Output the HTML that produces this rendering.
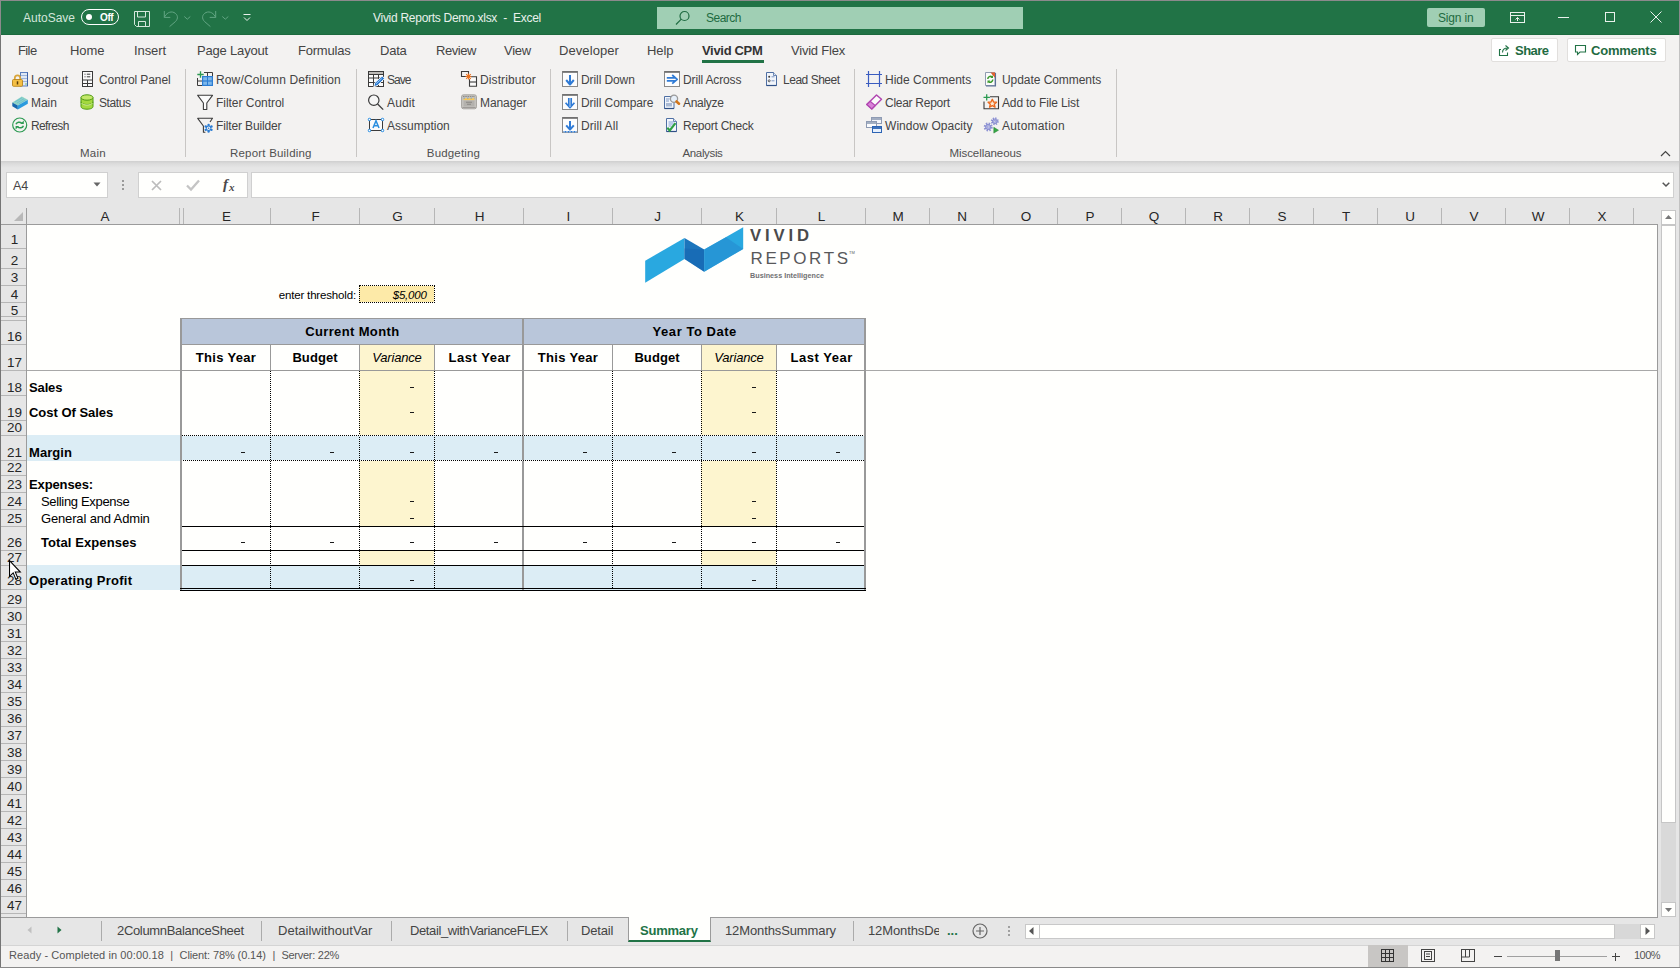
<!DOCTYPE html><html><head><meta charset="utf-8"><title>Excel</title><style>*{box-sizing:border-box;margin:0;padding:0}
html,body{width:1680px;height:968px;overflow:hidden;background:#e6e6e6}
body{font-family:"Liberation Sans",sans-serif;font-size:12px;color:#444}
#win{position:absolute;left:0;top:0;width:1680px;height:968px;overflow:hidden;background:#e6e6e6}
.abs,.t,.b{position:absolute}
.t{white-space:nowrap;line-height:1}
svg{position:absolute;overflow:visible}
/* title bar */
#tb{position:absolute;left:0;top:0;width:1680px;height:35px;background:#217346}
#tb .t{color:#fff}
/* tabs */
#tabs{position:absolute;left:0;top:35px;width:1680px;height:30px;background:#f3f2f1}
#tabs .t{font-size:13px;color:#444;top:9px}
/* ribbon */
#rb{position:absolute;left:0;top:65px;width:1680px;height:96px;background:#f3f2f1}
#rb .t{font-size:12px;color:#444}
#rb .g{font-size:11.5px;color:#505050}
#rb .sep{position:absolute;top:4px;width:1px;height:88px;background:#c8c6c4}
/* formula */
#fb{position:absolute;left:0;top:161px;width:1680px;height:46px;background:#e6e6e6}
/* grid */
#grid{position:absolute;left:0;top:207px;width:1680px;height:711px;background:#e6e6e6}
#sheet{position:absolute;left:27px;top:18px;width:1630px;height:688px;background:#fffffd;overflow:hidden}
.ch{position:absolute;top:0;height:17px;font-size:13.500px;color:#262626;text-align:center;line-height:19px;padding-left:2px}
.rh{position:absolute;left:1px;width:27px;font-size:13.500px;color:#262626;text-align:center}
.cell{position:absolute;white-space:nowrap;color:#000;line-height:1}
/* bottom */
#stabs{position:absolute;left:0;top:918px;width:1680px;height:27px;background:#e6e6e6}
#status{position:absolute;left:0;top:945px;width:1680px;height:23px;background:#f3f2f1}
</style></head><body>
<div id="win">
<div id="tb">
  <div class="abs darkline" style="left:0;top:34px;width:1680px;height:1px;background:#1c6a3e"></div>
  <div class="t" style="left:23px;top:12px;font-size:12px;color:#d3e6db">AutoSave</div>
  <div class="abs" style="left:81px;top:9px;width:38px;height:16px;border:1px solid #fff;border-radius:9px"></div>
  <div class="abs" style="left:86px;top:14px;width:6px;height:6px;border-radius:50%;background:#fff"></div>
  <div class="t" style="left:100px;top:13px;font-size:10px;font-weight:bold;color:#fff;letter-spacing:-0.400px">Off</div>
  <!-- save icon -->
  <svg style="left:134px;top:11px" width="16" height="16" viewBox="0 0 16 16" fill="none" stroke="#d6e8dd" stroke-width="1"><path d="M0.500 0.500h15v15h-13l-2-2z"/><path d="M3.500 0.500v5.500h8v-5.500"/><path d="M4.500 15.500v-5h7v5"/></svg>
  <!-- undo -->
  <svg style="left:163px;top:10px" width="16" height="17" viewBox="0 0 16 17" fill="none" stroke="#62a583" stroke-width="1"><path d="M1.300 1v6.400h6"/><path d="M1.300 7.400C3 3.500 7 0.800 11 2.500C15 4.500 15.500 8.500 12.500 11.500L6.600 16.600"/></svg>
  <svg style="left:183.500px;top:15.500px" width="7" height="4" viewBox="0 0 7 4" fill="none" stroke="#62a583" stroke-width="1"><path d="M0.300 0.500l3 2.700l3-2.700"/></svg>
  <!-- redo -->
  <svg style="left:201px;top:10px" width="16" height="17" viewBox="0 0 16 17" fill="none" stroke="#62a583" stroke-width="1"><path d="M14.700 1v6.400h-6"/><path d="M14.700 7.400C13 3.500 9 0.800 5 2.500C1 4.500 0.500 8.500 3.500 11.500L9.400 16.600"/></svg>
  <svg style="left:221.500px;top:15.500px" width="7" height="4" viewBox="0 0 7 4" fill="none" stroke="#62a583" stroke-width="1"><path d="M0.300 0.500l3 2.700l3-2.700"/></svg>
  <!-- qat customize -->
  <svg style="left:243px;top:14px" width="8" height="8" viewBox="0 0 8 8" fill="none" stroke="#e9f1ec" stroke-width="1"><path d="M0.5 0.5h7"/><path d="M1 3.5l3 3l3-3"/></svg>
  <div class="t" style="left:373px;top:12px;font-size:12px;color:#e9f1ec;letter-spacing:-0.278px">Vivid Reports Demo.xlsx&nbsp; -&nbsp; Excel</div>
  <!-- search -->
  <div class="abs" style="left:657px;top:7px;width:366px;height:22px;background:#a0cfb4"></div>
  <svg style="left:675px;top:10px" width="16" height="16" viewBox="0 0 16 16" fill="none" stroke="#1e6b41" stroke-width="1.2"><circle cx="9.5" cy="6" r="4.5"/><path d="M6.3 9.2L1 14.5"/></svg>
  <div class="t" style="left:706px;top:12px;font-size:12px;color:#1e6b41;letter-spacing:-0.500px">Search</div>
  <!-- sign in -->
  <div class="abs" style="left:1427px;top:8px;width:58px;height:19px;background:#a0cfb4;border-radius:2px"></div>
  <div class="t" style="left:1438px;top:12px;font-size:12px;color:#1e6b41;letter-spacing:-0.170px">Sign in</div>
  <!-- ribbon display options -->
  <svg style="left:1510px;top:12px" width="15" height="11" viewBox="0 0 15 11" fill="none" stroke="#e9f1ec" stroke-width="1"><rect x="0.5" y="0.5" width="14" height="10"/><path d="M0.5 3.5h14"/><path d="M7.5 9V5.5M5.5 7.5l2-2l2 2"/></svg>
  <!-- minimize -->
  <div class="abs" style="left:1558px;top:17px;width:11px;height:1px;background:#e9f1ec"></div>
  <!-- maximize -->
  <div class="abs" style="left:1605px;top:12px;width:10px;height:10px;border:1px solid #e9f1ec"></div>
  <!-- close -->
  <svg style="left:1650px;top:11px" width="12" height="12" viewBox="0 0 12 12" fill="none" stroke="#e9f1ec" stroke-width="1"><path d="M0.5 0.5l11 11M11.5 0.5l-11 11"/></svg>
</div>

<div id="tabs">
  <div class="t" style="left:18px;letter-spacing:-0.613px">File</div>
  <div class="t" style="left:70px;letter-spacing:-0.047px">Home</div>
  <div class="t" style="left:134px;letter-spacing:-0.086px">Insert</div>
  <div class="t" style="left:197px;letter-spacing:-0.183px">Page Layout</div>
  <div class="t" style="left:298px;letter-spacing:-0.211px">Formulas</div>
  <div class="t" style="left:380px;letter-spacing:-0.242px">Data</div>
  <div class="t" style="left:436px;letter-spacing:-0.438px">Review</div>
  <div class="t" style="left:504px;letter-spacing:-0.238px">View</div>
  <div class="t" style="left:559px;letter-spacing:0.082px">Developer</div>
  <div class="t" style="left:647px;letter-spacing:-0.062px">Help</div>
  <div class="t" style="left:702px;font-weight:bold;color:#333;letter-spacing:-0.316px">Vivid CPM</div>
  <div class="abs" style="left:702px;top:25px;width:62px;height:3px;background:#217346"></div>
  <div class="t" style="left:791px;letter-spacing:-0.212px">Vivid Flex</div>
  <!-- share -->
  <div class="abs" style="left:1491px;top:3px;width:67px;height:24px;background:#fff;border:1px solid #e1dfdd;border-radius:2px"></div>
  <svg style="left:1499px;top:10px" width="12" height="11" viewBox="0 0 12 11" fill="none" stroke="#217346" stroke-width="1.1"><path d="M2 4.5h-1.5v6h8v-3"/><path d="M3.5 7.5c0-3 2-4.500 5-4.500M6.500 0.500l3 2.500l-3 2.500"/></svg>
  <div class="t" style="left:1515px;font-weight:bold;color:#1f6b42;letter-spacing:-0.528px">Share</div>
  <!-- comments -->
  <div class="abs" style="left:1567px;top:3px;width:99px;height:24px;background:#fff;border:1px solid #e1dfdd;border-radius:2px"></div>
  <svg style="left:1575px;top:10px" width="12" height="11" viewBox="0 0 12 11" fill="none" stroke="#217346" stroke-width="1.1"><path d="M0.5 0.5h10v6.500h-5.500l-2.500 2.500v-2.500h-2z"/></svg>
  <div class="t" style="left:1591px;font-weight:bold;color:#1f6b42;letter-spacing:-0.211px">Comments</div>
</div>

<div id="rb">
<svg style="left:12px;top:6px" width="16" height="16" viewBox="0 0 16 16"><rect x="8.500" y="1.500" width="7" height="13.500" fill="#dfe8f5" stroke="#5b7fbf" stroke-width="1"/><path d="M9 4.500h6M9 7.500h6M9 10.500h6" stroke="#9db5dc" stroke-width="1"/><path d="M15.500 1.500v13.500" stroke="#3f62a8" stroke-width="1"/><circle cx="14" cy="13" r="0.700" fill="#4caf50"/><path d="M2.800 9V7a2.700 2.700 0 0 1 5.400 0V9" fill="none" stroke="#d9a53a" stroke-width="1.700"/><rect x="0.500" y="8.500" width="10" height="6.800" rx="1" fill="#f4bf45" stroke="#b9861c" stroke-width="0.900"/><path d="M5.500 10.300v3.200" stroke="#5a3d08" stroke-width="1.500"/></svg>
<div class="t" style="left:31px;top:9px;letter-spacing:0.066px">Logout</div>
<svg style="left:80px;top:6px" width="16" height="16" viewBox="0 0 16 16"><rect x="2.500" y="0.500" width="10" height="15" fill="#fbfbfb" stroke="#3b3b3b" stroke-width="1"/><path d="M2.500 9h10M2.500 12.500h10M7.500 9v6.500" stroke="#3b3b3b" stroke-width="1" fill="none"/><path d="M4.500 3.200h1M6.800 3.200h3.500M4.500 5.800h1M6.800 5.800h3.500" stroke="#3b3b3b" stroke-width="1"/></svg>
<div class="t" style="left:99px;top:9px;letter-spacing:-0.086px">Control Panel</div>
<svg style="left:12px;top:29px" width="16" height="16" viewBox="0 0 16 16"><path d="M0.300 8.500l9.500-6l6 3.200l-10 5.800z" fill="#8fd3c4"/><path d="M3 8l7-4.300M5 9l7-4.300M7 9.800l6.500-4" stroke="#5fb7d8" stroke-width="0.700"/><path d="M0.300 8.500l5.500 3v4l-5.500-3.200z" fill="#1667ad"/><path d="M5.800 11.500l10-5.800v4l-10 5.800z" fill="#2a9ade"/></svg>
<div class="t" style="left:31px;top:32px;letter-spacing:-0.029px">Main</div>
<svg style="left:80px;top:29px" width="16" height="16" viewBox="0 0 16 16"><path d="M1 3.500v9c0 1.700 2.700 2.700 6 2.700s6-1 6-2.700v-9" fill="#a4d93f" stroke="#4f9a14" stroke-width="1"/><ellipse cx="7" cy="3.500" rx="6" ry="2.700" fill="#c3e86a" stroke="#4f9a14" stroke-width="1"/><path d="M1 7.800c0 1.700 2.700 2.700 6 2.700s6-1 6-2.700" fill="none" stroke="#4f9a14" stroke-width="0.900"/><path d="M1.600 9c0.500 1.300 2.700 2 5.400 2s4.900-0.700 5.400-2" fill="none" stroke="#e3f5b4" stroke-width="0.800"/></svg>
<div class="t" style="left:99px;top:32px;letter-spacing:-0.422px">Status</div>
<svg style="left:12px;top:52px" width="16" height="16" viewBox="0 0 16 16"><circle cx="7.700" cy="8" r="7" fill="none" stroke="#2c9a52" stroke-width="1.200"/><path d="M4 7.300c0.600-2 3.800-3 5.800-1M11.400 8.700c-0.600 2-3.800 3-5.800 1" fill="none" stroke="#2c9a52" stroke-width="1.500"/><path d="M11.800 3.600v3.400h-3.400zM3.600 12.400v-3.400h3.400z" fill="#2c9a52"/></svg>
<div class="t" style="left:31px;top:55px;letter-spacing:-0.619px">Refresh</div>
<svg style="left:197px;top:6px" width="16" height="16" viewBox="0 0 16 16"><path d="M7 1.500h8.500v4M0.500 7v7.500h5" fill="none" stroke="#3b3b3b" stroke-width="1"/><path d="M0.500 10h5M10.500 1.500v4" stroke="#3b3b3b" stroke-width="1"/><rect x="5" y="5" width="11" height="10" fill="#2b7cd3"/><rect x="6.200" y="6.200" width="3.800" height="3.200" fill="#7db7ea"/><rect x="11" y="6.200" width="3.800" height="3.200" fill="#7db7ea"/><rect x="6.200" y="10.600" width="3.800" height="3.200" fill="#7db7ea"/><rect x="11" y="10.600" width="3.800" height="3.200" fill="#7db7ea"/><path d="M3.500 0.300v6.400M0.300 3.500h6.400" stroke="#2c9a52" stroke-width="1.300"/></svg>
<div class="t" style="left:216px;top:9px;letter-spacing:0.135px">Row/Column Definition</div>
<svg style="left:197px;top:29px" width="16" height="16" viewBox="0 0 16 16"><path d="M0.700 1.300h14.800l-5.700 7.700v6.500h-3.400v-6.500z" fill="#fbfbfb" stroke="#3b3b3b" stroke-width="1.100" stroke-linejoin="round"/></svg>
<div class="t" style="left:216px;top:32px;letter-spacing:-0.035px">Filter Control</div>
<svg style="left:197px;top:52px" width="16" height="16" viewBox="0 0 16 16"><path d="M13 5l2.500-3.700h-14.800l5.700 7.700v6.300h2" fill="none" stroke="#3b3b3b" stroke-width="1.100" stroke-linejoin="round"/><g transform="translate(11.600 11.200)" fill="#2b7cd3"><circle r="2.700"/><circle cx="0" cy="-3.300" r="1.200"/><circle cx="2.860" cy="-1.650" r="1.200"/><circle cx="2.860" cy="1.650" r="1.200"/><circle cx="0" cy="3.300" r="1.200"/><circle cx="-2.860" cy="1.650" r="1.200"/><circle cx="-2.860" cy="-1.650" r="1.200"/><circle r="1.700" fill="#f3f2f1"/><circle r="0.800"/></g></svg>
<div class="t" style="left:216px;top:55px;letter-spacing:-0.14px">Filter Builder</div>
<svg style="left:368px;top:6px" width="16" height="16" viewBox="0 0 16 16"><rect x="0.500" y="0.500" width="15" height="15" fill="#fbfbfb" stroke="#3b3b3b"/><rect x="1" y="1" width="14" height="2.300" fill="#bdbbb8"/><path d="M0.500 3.500h15M0.500 7h15M0.500 11.500h15M5.500 3.500v12M10.500 3.500v12" stroke="#3b3b3b" fill="none"/><path d="M5.800 15.800l1-4l7.500-6.800l2.200 2.600l-7.200 7z" fill="#2b7cd3" stroke="#fbfbfb" stroke-width="0.900"/><path d="M8 12.800l5.800-5.300" stroke="#cfe3f8" stroke-width="0.700"/></svg>
<div class="t" style="left:387px;top:9px;letter-spacing:-0.965px">Save</div>
<svg style="left:461px;top:6px" width="16" height="16" viewBox="0 0 16 16"><path d="M5 5.500h-4.500v-5h7v2.500" fill="none" stroke="#3b3b3b" stroke-width="1.100"/><path d="M10 5.800h5.500v9.500h-7v-7" fill="#fbfbfb" stroke="#3b3b3b" stroke-width="1.100"/><path d="M8.500 11h7" stroke="#3b3b3b" stroke-width="1.100"/><path d="M5.200 3.200l4.600 4.600M9.800 3.200l-4.600 4.600M7.500 2.500v6M4.500 5.500h6" stroke="#e9701e" stroke-width="1.100"/></svg>
<div class="t" style="left:480px;top:9px;letter-spacing:0.101px">Distributor</div>
<svg style="left:368px;top:29px" width="16" height="16" viewBox="0 0 16 16"><circle cx="5.800" cy="6.200" r="5.200" fill="#f6f6f6" stroke="#3b3b3b" stroke-width="1.200"/><path d="M9.600 10l5.600 5.600" stroke="#3b3b3b" stroke-width="1.300"/></svg>
<div class="t" style="left:387px;top:32px;letter-spacing:0.128px">Audit</div>
<svg style="left:461px;top:29px" width="16" height="16" viewBox="0 0 16 16"><rect x="0.500" y="0.800" width="15" height="14" rx="2" fill="#c4c2be" stroke="#aaa8a4"/><path d="M2 2.500h12" stroke="#8d8b87" stroke-width="1.200" stroke-dasharray="1.500 0.800"/><rect x="2.500" y="4.200" width="11" height="2" fill="#f6c65a"/><path d="M2.500 4.200h11" stroke="#5b9bd5" stroke-width="0.700" stroke-dasharray="1.500 2"/><rect x="2.500" y="6.500" width="11" height="6" fill="#b3b1ad"/><path d="M5 8.300h6M6 10.300h4" stroke="#8a8884" stroke-width="1.100"/><path d="M1.500 13.600h13" stroke="#9a9894" stroke-width="1"/></svg>
<div class="t" style="left:480px;top:32px;letter-spacing:-0.082px">Manager</div>
<svg style="left:368px;top:52px" width="16" height="16" viewBox="0 0 16 16"><rect x="1.500" y="2.500" width="13" height="11" fill="#fbfbfb" stroke="#3b3b3b"/><path d="M5 11l3-7.300l3 7.300M6 8.700h4" fill="none" stroke="#2b8fe0" stroke-width="1.500"/><rect x="0.300" y="1.300" width="2.400" height="2.400" rx="0.800" fill="#fff" stroke="#1e88e0" stroke-width="0.900"/><rect x="13.300" y="1.300" width="2.400" height="2.400" rx="0.800" fill="#fff" stroke="#1e88e0" stroke-width="0.900"/><rect x="0.300" y="12.300" width="2.400" height="2.400" rx="0.800" fill="#fff" stroke="#1e88e0" stroke-width="0.900"/><rect x="13.300" y="12.300" width="2.400" height="2.400" rx="0.800" fill="#fff" stroke="#1e88e0" stroke-width="0.900"/></svg>
<div class="t" style="left:387px;top:55px;letter-spacing:0.01px">Assumption</div>
<svg style="left:562px;top:6px" width="16" height="16" viewBox="0 0 16 16"><rect x="0.500" y="0.500" width="15" height="15" fill="#fdfdfd" stroke="#8a8a8a"/><path d="M0.500 1h15" stroke="#6a6a6a" stroke-width="1.600"/><path d="M8 4v9.500M4.200 9l3.800 4.500l3.800-4.500" fill="none" stroke="#2f7bd6" stroke-width="2" stroke-linejoin="round"/></svg>
<div class="t" style="left:581px;top:9px;letter-spacing:-0.089px">Drill Down</div>
<svg style="left:664px;top:6px" width="16" height="16" viewBox="0 0 16 16"><rect x="0.500" y="0.500" width="15" height="15" fill="#fdfdfd" stroke="#8a8a8a"/><path d="M0.500 1h15" stroke="#6a6a6a" stroke-width="1.600"/><path d="M2.800 6.800h8M2.800 9.800h8M8.200 4l5 4.300l-5 4.300" fill="none" stroke="#2f7bd6" stroke-width="1.700" stroke-linejoin="round"/></svg>
<div class="t" style="left:683px;top:9px;letter-spacing:-0.143px">Drill Across</div>
<svg style="left:765px;top:6px" width="16" height="16" viewBox="0 0 16 16"><path d="M1.500 1.500h7l3 3v10h-10z" fill="#f1f5fb" stroke="#4e6fa3"/><path d="M8.500 1.500v3h3" fill="#dfe7f3" stroke="#4e6fa3" stroke-width="0.800"/><path d="M1.500 14.500h10" stroke="#2f4f86" stroke-width="1.200"/><circle cx="4.200" cy="5.800" r="1" fill="#3b3b3b"/><circle cx="4.200" cy="9.800" r="1" fill="none" stroke="#3b3b3b" stroke-width="0.800"/><path d="M6.500 5.800h3M6.500 9.800h3" stroke="#7e98c4"/></svg>
<div class="t" style="left:783px;top:9px;letter-spacing:-0.479px">Lead Sheet</div>
<svg style="left:562px;top:29px" width="16" height="16" viewBox="0 0 16 16"><rect x="0.500" y="0.500" width="15" height="15" fill="#fdfdfd" stroke="#8a8a8a"/><path d="M0.500 1h15" stroke="#6a6a6a" stroke-width="1.600"/><path d="M6.800 4v9M9.200 4v9M3.600 8.700l4.400 5l4.400-5" fill="none" stroke="#2f7bd6" stroke-width="1.700" stroke-linejoin="round"/></svg>
<div class="t" style="left:581px;top:32px;letter-spacing:-0.074px">Drill Compare</div>
<svg style="left:664px;top:29px" width="16" height="16" viewBox="0 0 16 16"><path d="M0.500 2.500h7.500l2 2v10h-9.500z" fill="#f1f5fb" stroke="#4e6fa3"/><path d="M2 5h3.500M2 7h3" stroke="#7e98c4"/><rect x="2" y="9" width="6" height="3.500" fill="#a9b9d3"/><path d="M0.500 14.500h9.500" stroke="#2f4f86" stroke-width="1.200"/><circle cx="10" cy="4.800" r="3.600" fill="#e6eff9" stroke="#9a9a9a" stroke-width="1.300"/><path d="M12.500 7.500l2.500 2.200" stroke="#d4761a" stroke-width="2.600" stroke-linecap="round"/></svg>
<div class="t" style="left:683px;top:32px;letter-spacing:-0.315px">Analyze</div>
<svg style="left:562px;top:52px" width="16" height="16" viewBox="0 0 16 16"><rect x="0.500" y="0.500" width="15" height="15" fill="#fdfdfd" stroke="#8a8a8a"/><path d="M0.500 1h15" stroke="#6a6a6a" stroke-width="1.600"/><path d="M8 4v8.500M4.200 8.300l3.800 4.300l3.800-4.300" fill="none" stroke="#2f7bd6" stroke-width="2" stroke-linejoin="round"/><path d="M1 14.700h14" stroke="#8fb8e8" stroke-width="1.400"/><path d="M3 14.700h1M6 14.700h1M9 14.700h1M12 14.700h1" stroke="#2f7bd6" stroke-width="1.400"/></svg>
<div class="t" style="left:581px;top:55px;letter-spacing:0.048px">Drill All</div>
<svg style="left:664px;top:52px" width="16" height="16" viewBox="0 0 16 16"><path d="M2.500 1.500h7l3 3v10h-10z" fill="#f4f7fc" stroke="#4e6fa3"/><path d="M9.500 1.500v3h3" fill="#dfe7f3" stroke="#4e6fa3" stroke-width="0.800"/><path d="M2.500 14.500h10" stroke="#2f4f86" stroke-width="1.200"/><path d="M4.500 5h5M4.500 7h6M4.500 9h3" stroke="#7f9fd6"/><path d="M3.300 10.800l2.400 2.700l5.800-7.300" fill="none" stroke="#2ea043" stroke-width="2.100"/></svg>
<div class="t" style="left:683px;top:55px;letter-spacing:-0.24px">Report Check</div>
<svg style="left:866px;top:6px" width="16" height="16" viewBox="0 0 16 16"><path d="M2.500 0v16M13.500 0v16M0 3.500h16M0 12.500h16" stroke="#3a5cc0" stroke-width="1.200" fill="none"/></svg>
<div class="t" style="left:885px;top:9px;letter-spacing:0.013px">Hide Comments</div>
<svg style="left:983px;top:6px" width="16" height="16" viewBox="0 0 16 16"><path d="M2.500 1.500h9.500v13h-9.500z" fill="#fbfbfb" stroke="#8f9bb0"/><path d="M12.500 2v13h-9.500" fill="none" stroke="#5a6f96" stroke-width="1.100"/><path d="M8 1.500h4v5z" fill="#e8622c"/><path d="M8 1.500l4 5" stroke="#b8431a" stroke-width="0.600"/><path d="M4.800 8a2.600 2.600 0 0 1 4.300-2M9.800 8.600a2.600 2.600 0 0 1-4.300 2" fill="none" stroke="#3a9a2a" stroke-width="1.500"/><path d="M10 4.200v2.800h-2.800zM4.500 12.300v-2.800h2.800z" fill="#3a9a2a"/></svg>
<div class="t" style="left:1002px;top:9px;letter-spacing:-0.056px">Update Comments</div>
<svg style="left:866px;top:29px" width="16" height="16" viewBox="0 0 16 16"><path d="M0.800 10.500l9.700-9.500l5 4.300l-9.700 9.700z" fill="#fbfbfb" stroke="#b146b1" stroke-width="1.500" stroke-linejoin="round"/><path d="M0.800 10.500l3.400-3.300l5 4.300l-3.400 3.500z" fill="#d982d9" stroke="#b146b1" stroke-width="1.200"/></svg>
<div class="t" style="left:885px;top:32px;letter-spacing:-0.278px">Clear Report</div>
<svg style="left:983px;top:29px" width="16" height="16" viewBox="0 0 16 16"><path d="M7 2.800h8.500v12h-14.500v-7.300" fill="none" stroke="#3b3b3b" stroke-width="1.100"/><path d="M3.700 0.200v6.400M0.500 3.400h6.400" stroke="#2c9a52" stroke-width="1.300"/><path d="M9.300 5.300l1.300 2.700l2.900 0.300l-2.200 2l0.700 2.900l-2.700-1.500l-2.700 1.500l0.700-2.900l-2.200-2l2.900-0.300z" fill="#fde7cf" stroke="#ec6a1e" stroke-width="1.400" stroke-linejoin="round"/></svg>
<div class="t" style="left:1002px;top:32px;letter-spacing:-0.142px">Add to File List</div>
<svg style="left:866px;top:52px" width="16" height="16" viewBox="0 0 16 16"><rect x="5.500" y="0.500" width="10" height="6" fill="#f4f6fa" stroke="#8e9bb3"/><path d="M5.500 2h10" stroke="#8e9bb3" stroke-width="1.600"/><rect x="0.500" y="4.500" width="10" height="6" fill="#fbfcfe" stroke="#8e9bb3"/><path d="M0.500 6h10" stroke="#8e9bb3" stroke-width="1.600"/><rect x="6.500" y="9.500" width="9" height="6" fill="#e6f0fd" stroke="#2c64b4"/><path d="M6.500 11h9" stroke="#2c64b4" stroke-width="1.800"/></svg>
<div class="t" style="left:885px;top:55px;letter-spacing:0.057px">Window Opacity</div>
<svg style="left:983px;top:52px" width="16" height="16" viewBox="0 0 16 16"><g transform="translate(5.200 10)"><circle r="3.400" fill="none" stroke="#8f93d4" stroke-width="2.200" stroke-dasharray="1.500 1.170"/><circle r="2.600" fill="#b5b9ea" stroke="#7075c2" stroke-width="0.700"/><circle r="1" fill="#f3f2f1" stroke="#7075c2" stroke-width="0.500"/></g><g transform="translate(11.800 4.300)"><circle r="3" fill="none" stroke="#8f93d4" stroke-width="2" stroke-dasharray="1.300 1.060"/><circle r="2.300" fill="#b5b9ea" stroke="#7075c2" stroke-width="0.700"/><circle r="0.900" fill="#f3f2f1" stroke="#7075c2" stroke-width="0.500"/></g><path d="M10.800 10.300l4.700 2.900l-4.700 2.900z" fill="#35a845" stroke="#1e7a2c" stroke-width="0.500"/></svg>
<div class="t" style="left:1002px;top:55px;letter-spacing:0.21px">Automation</div>
<div class="t g" style="left:80.1px;top:83px;letter-spacing:0.191px">Main</div>
<div class="t g" style="left:230.0px;top:83px;letter-spacing:0.204px">Report Building</div>
<div class="t g" style="left:426.8px;top:83px;letter-spacing:0.167px">Budgeting</div>
<div class="t g" style="left:682.5px;top:83px;letter-spacing:-0.354px">Analysis</div>
<div class="t g" style="left:949.5px;top:83px;letter-spacing:-0.067px">Miscellaneous</div>
<div class="sep" style="left:185px"></div>
<div class="sep" style="left:356px"></div>
<div class="sep" style="left:550px"></div>
<div class="sep" style="left:854px"></div>
<div class="sep" style="left:1116px"></div>
<svg style="left:1660px;top:85px" width="11" height="7" viewBox="0 0 11 7" fill="none" stroke="#444" stroke-width="1.200"><path d="M1 6l4.500-4.500l4.500 4.500"/></svg>
</div>
<div id="fb">
  <!-- name box -->
  <div class="abs" style="left:6px;top:11px;width:102px;height:26px;background:#fffffd;border:1px solid #d0d0d0"></div>
  <div class="t" style="left:13px;top:19px;font-size:12.500px;color:#444">A4</div>
  <svg style="left:93px;top:21px" width="8" height="5" viewBox="0 0 8 5"><path d="M0.500 0.500h7l-3.500 4z" fill="#666"/></svg>
  <!-- dots -->
  <div class="abs" style="left:122px;top:19px;width:2px;height:2px;background:#9a9a9a"></div>
  <div class="abs" style="left:122px;top:23px;width:2px;height:2px;background:#9a9a9a"></div>
  <div class="abs" style="left:122px;top:27px;width:2px;height:2px;background:#9a9a9a"></div>
  <!-- buttons box -->
  <div class="abs" style="left:138px;top:11px;width:110px;height:26px;background:#fffffd;border:1px solid #d0d0d0"></div>
  <svg style="left:151px;top:19px" width="11" height="11" viewBox="0 0 11 11" fill="none" stroke="#bcbcbc" stroke-width="1.700"><path d="M1 1l9 9M10 1l-9 9"/></svg>
  <svg style="left:186px;top:19px" width="14" height="11" viewBox="0 0 14 11" fill="none" stroke="#c4c4c4" stroke-width="2.300"><path d="M1 5.500l4 4l8-9"/></svg>
  <div class="t" style="left:223px;top:16px;font-family:'Liberation Serif',serif;font-style:italic;font-weight:bold;font-size:15px;color:#4a4a4a">f</div>
  <div class="t" style="left:229px;top:21px;font-family:'Liberation Serif',serif;font-style:italic;font-weight:bold;font-size:11px;color:#4a4a4a">x</div>
  <!-- formula input -->
  <div class="abs" style="left:251px;top:11px;width:1423px;height:26px;background:#fffffd;border:1px solid #d0d0d0"></div>
  <svg style="left:1662px;top:21px" width="8" height="5" viewBox="0 0 8 5" fill="none" stroke="#555" stroke-width="1.500"><path d="M0.700 0.700l3.300 3.300l3.300-3.300"/></svg>
  <div class="abs" style="left:0;top:0;width:1680px;height:7px;background:linear-gradient(#cfcfcf,#dcdcdc 40%,#e6e6e6)"></div>
</div>

<div id="grid">
<div class="abs" style="left:27px;top:18px;width:1630px;height:692px;background:#fffffd"></div>
<div class="abs" style="left:181px;top:112px;width:684px;height:25px;background:#b9c6da"></div>
<div class="abs" style="left:359px;top:138px;width:75px;height:90px;background:#fdf5cf"></div>
<div class="abs" style="left:359px;top:254px;width:75px;height:65px;background:#fdf5cf"></div>
<div class="abs" style="left:359px;top:344px;width:75px;height:14px;background:#fdf5cf"></div>
<div class="abs" style="left:701px;top:138px;width:75px;height:90px;background:#fdf5cf"></div>
<div class="abs" style="left:701px;top:254px;width:75px;height:65px;background:#fdf5cf"></div>
<div class="abs" style="left:701px;top:344px;width:75px;height:14px;background:#fdf5cf"></div>
<div class="abs" style="left:27px;top:228px;width:153px;height:26px;background:#dcedf5"></div>
<div class="abs" style="left:182px;top:229px;width:682px;height:24px;background:#dcedf5"></div>
<div class="abs" style="left:27px;top:358px;width:153px;height:25px;background:#dcedf5"></div>
<div class="abs" style="left:182px;top:359px;width:682px;height:24px;background:#dcedf5"></div>
<div class="abs" style="left:359px;top:79px;width:75px;height:16px;background:#fdeaa8"></div>
<div class="abs" style="left:359px;top:78px;width:76px;height:18px;border:1px dotted #000"></div>
<div class="abs" style="left:27px;top:163px;width:1630px;height:1px;background:#a8a8a8"></div>
<div class="abs" style="left:180px;top:111px;width:686px;height:1px;background:#999999"></div>
<div class="abs" style="left:180px;top:111px;width:2px;height:273px;background:#999999"></div>
<div class="abs" style="left:522px;top:111px;width:2px;height:273px;background:#999999"></div>
<div class="abs" style="left:864px;top:111px;width:2px;height:273px;background:#999999"></div>
<div class="abs" style="left:180px;top:137px;width:686px;height:1px;background:#999999"></div>
<div class="abs" style="left:180px;top:163px;width:686px;height:1px;background:#999999"></div>
<div class="abs" style="left:270px;top:138px;width:1px;height:25px;background:#999999"></div>
<div class="abs" style="left:359px;top:138px;width:1px;height:25px;background:#999999"></div>
<div class="abs" style="left:434px;top:138px;width:1px;height:25px;background:#999999"></div>
<div class="abs" style="left:612px;top:138px;width:1px;height:25px;background:#999999"></div>
<div class="abs" style="left:701px;top:138px;width:1px;height:25px;background:#999999"></div>
<div class="abs" style="left:776px;top:138px;width:1px;height:25px;background:#999999"></div>
<div class="abs" style="left:270px;top:164px;width:1px;height:217px;background:repeating-linear-gradient(180deg,#000 0 1px,transparent 1px 2px)"></div>
<div class="abs" style="left:359px;top:164px;width:1px;height:217px;background:repeating-linear-gradient(180deg,#000 0 1px,transparent 1px 2px)"></div>
<div class="abs" style="left:434px;top:164px;width:1px;height:217px;background:repeating-linear-gradient(180deg,#000 0 1px,transparent 1px 2px)"></div>
<div class="abs" style="left:612px;top:164px;width:1px;height:217px;background:repeating-linear-gradient(180deg,#000 0 1px,transparent 1px 2px)"></div>
<div class="abs" style="left:701px;top:164px;width:1px;height:217px;background:repeating-linear-gradient(180deg,#000 0 1px,transparent 1px 2px)"></div>
<div class="abs" style="left:776px;top:164px;width:1px;height:217px;background:repeating-linear-gradient(180deg,#000 0 1px,transparent 1px 2px)"></div>
<div class="abs" style="left:182px;top:228px;width:682px;height:1px;background:repeating-linear-gradient(90deg,#000 0 1px,#fffffd 1px 2px)"></div>
<div class="abs" style="left:183px;top:253px;width:681px;height:1px;background:repeating-linear-gradient(90deg,#000 0 1px,#fffffd 1px 2px)"></div>
<div class="abs" style="left:182px;top:319px;width:682px;height:1px;background:#000"></div>
<div class="abs" style="left:182px;top:343px;width:682px;height:1px;background:#000"></div>
<div class="abs" style="left:182px;top:358px;width:682px;height:1px;background:#000"></div>
<div class="abs" style="left:180px;top:381px;width:686px;height:1px;background:#000"></div>
<div class="abs" style="left:180px;top:383px;width:686px;height:1px;background:#000"></div>
<div class="cell" style="left:305.2px;top:118px;font-size:13px;font-weight:bold;letter-spacing:0.366px;">Current Month</div>
<div class="cell" style="left:652.6px;top:118px;font-size:13px;font-weight:bold;letter-spacing:0.542px;">Year To Date</div>
<div class="cell" style="left:195.8px;top:144px;font-size:13px;font-weight:bold;letter-spacing:0.302px;">This Year</div>
<div class="cell" style="left:292.4px;top:144px;font-size:13px;font-weight:bold;letter-spacing:0.086px;">Budget</div>
<div class="cell" style="left:372.3px;top:144px;font-size:13px;font-style:italic;letter-spacing:-0.191px;">Variance</div>
<div class="cell" style="left:448.6px;top:144px;font-size:13px;font-weight:bold;letter-spacing:0.523px;">Last Year</div>
<div class="cell" style="left:537.8px;top:144px;font-size:13px;font-weight:bold;letter-spacing:0.302px;">This Year</div>
<div class="cell" style="left:634.4px;top:144px;font-size:13px;font-weight:bold;letter-spacing:0.086px;">Budget</div>
<div class="cell" style="left:714.3px;top:144px;font-size:13px;font-style:italic;letter-spacing:-0.191px;">Variance</div>
<div class="cell" style="left:790.6px;top:144px;font-size:13px;font-weight:bold;letter-spacing:0.523px;">Last Year</div>
<div class="cell" style="left:29px;top:174px;font-size:13px;font-weight:bold;letter-spacing:-0.137px;">Sales</div>
<div class="cell" style="left:29px;top:199px;font-size:13px;font-weight:bold;letter-spacing:-0.018px;">Cost Of Sales</div>
<div class="cell" style="left:29px;top:239px;font-size:13px;font-weight:bold;letter-spacing:0.062px;">Margin</div>
<div class="cell" style="left:29px;top:271px;font-size:13px;font-weight:bold;letter-spacing:-0.116px;">Expenses:</div>
<div class="cell" style="left:41px;top:288px;font-size:13px;letter-spacing:-0.329px;">Selling Expense</div>
<div class="cell" style="left:41px;top:305px;font-size:13px;letter-spacing:-0.153px;">General and Admin</div>
<div class="cell" style="left:41px;top:329px;font-size:13px;font-weight:bold;letter-spacing:0.092px;">Total Expenses</div>
<div class="cell" style="left:29px;top:367px;font-size:13px;font-weight:bold;letter-spacing:0.272px;">Operating Profit</div>
<div class="cell" style="left:278.7px;top:83px;font-size:11.5px;letter-spacing:-0.164px;">enter threshold:</div>
<div class="cell" style="left:392.7px;top:83px;font-size:11.5px;font-style:italic;letter-spacing:-0.198px;">$5,000</div>
<div class="abs" style="left:410px;top:180px;width:4px;height:1px;background:#1a1a1a"></div>
<div class="abs" style="left:752px;top:180px;width:4px;height:1px;background:#1a1a1a"></div>
<div class="abs" style="left:410px;top:205px;width:4px;height:1px;background:#1a1a1a"></div>
<div class="abs" style="left:752px;top:205px;width:4px;height:1px;background:#1a1a1a"></div>
<div class="abs" style="left:410px;top:245px;width:4px;height:1px;background:#1a1a1a"></div>
<div class="abs" style="left:752px;top:245px;width:4px;height:1px;background:#1a1a1a"></div>
<div class="abs" style="left:410px;top:294px;width:4px;height:1px;background:#1a1a1a"></div>
<div class="abs" style="left:752px;top:294px;width:4px;height:1px;background:#1a1a1a"></div>
<div class="abs" style="left:410px;top:311px;width:4px;height:1px;background:#1a1a1a"></div>
<div class="abs" style="left:752px;top:311px;width:4px;height:1px;background:#1a1a1a"></div>
<div class="abs" style="left:410px;top:335px;width:4px;height:1px;background:#1a1a1a"></div>
<div class="abs" style="left:752px;top:335px;width:4px;height:1px;background:#1a1a1a"></div>
<div class="abs" style="left:410px;top:373px;width:4px;height:1px;background:#1a1a1a"></div>
<div class="abs" style="left:752px;top:373px;width:4px;height:1px;background:#1a1a1a"></div>
<div class="abs" style="left:241px;top:245px;width:4px;height:1px;background:#1a1a1a"></div>
<div class="abs" style="left:330px;top:245px;width:4px;height:1px;background:#1a1a1a"></div>
<div class="abs" style="left:494px;top:245px;width:4px;height:1px;background:#1a1a1a"></div>
<div class="abs" style="left:583px;top:245px;width:4px;height:1px;background:#1a1a1a"></div>
<div class="abs" style="left:672px;top:245px;width:4px;height:1px;background:#1a1a1a"></div>
<div class="abs" style="left:836px;top:245px;width:4px;height:1px;background:#1a1a1a"></div>
<div class="abs" style="left:241px;top:335px;width:4px;height:1px;background:#1a1a1a"></div>
<div class="abs" style="left:330px;top:335px;width:4px;height:1px;background:#1a1a1a"></div>
<div class="abs" style="left:494px;top:335px;width:4px;height:1px;background:#1a1a1a"></div>
<div class="abs" style="left:583px;top:335px;width:4px;height:1px;background:#1a1a1a"></div>
<div class="abs" style="left:672px;top:335px;width:4px;height:1px;background:#1a1a1a"></div>
<div class="abs" style="left:836px;top:335px;width:4px;height:1px;background:#1a1a1a"></div>
<div class="abs" style="left:0px;top:0px;width:1680px;height:18px;background:#e6e6e6"></div>
<div class="abs" style="left:0px;top:17px;width:1658px;height:1px;background:#9b9b9b"></div>
<div class="ch" style="left:27px;width:154px;top:0px">A</div>
<div class="abs" style="left:183px;top:1px;width:1px;height:16px;background:#b6b6b6"></div>
<div class="ch" style="left:181px;width:89px;top:0px">E</div>
<div class="abs" style="left:270px;top:1px;width:1px;height:16px;background:#b6b6b6"></div>
<div class="ch" style="left:270px;width:89px;top:0px">F</div>
<div class="abs" style="left:359px;top:1px;width:1px;height:16px;background:#b6b6b6"></div>
<div class="ch" style="left:359px;width:75px;top:0px">G</div>
<div class="abs" style="left:434px;top:1px;width:1px;height:16px;background:#b6b6b6"></div>
<div class="ch" style="left:434px;width:89px;top:0px">H</div>
<div class="abs" style="left:523px;top:1px;width:1px;height:16px;background:#b6b6b6"></div>
<div class="ch" style="left:523px;width:89px;top:0px">I</div>
<div class="abs" style="left:612px;top:1px;width:1px;height:16px;background:#b6b6b6"></div>
<div class="ch" style="left:612px;width:89px;top:0px">J</div>
<div class="abs" style="left:701px;top:1px;width:1px;height:16px;background:#b6b6b6"></div>
<div class="ch" style="left:701px;width:75px;top:0px">K</div>
<div class="abs" style="left:776px;top:1px;width:1px;height:16px;background:#b6b6b6"></div>
<div class="ch" style="left:776px;width:89px;top:0px">L</div>
<div class="abs" style="left:865px;top:1px;width:1px;height:16px;background:#b6b6b6"></div>
<div class="ch" style="left:865px;width:64px;top:0px">M</div>
<div class="abs" style="left:929px;top:1px;width:1px;height:16px;background:#b6b6b6"></div>
<div class="ch" style="left:929px;width:64px;top:0px">N</div>
<div class="abs" style="left:993px;top:1px;width:1px;height:16px;background:#b6b6b6"></div>
<div class="ch" style="left:993px;width:64px;top:0px">O</div>
<div class="abs" style="left:1057px;top:1px;width:1px;height:16px;background:#b6b6b6"></div>
<div class="ch" style="left:1057px;width:64px;top:0px">P</div>
<div class="abs" style="left:1121px;top:1px;width:1px;height:16px;background:#b6b6b6"></div>
<div class="ch" style="left:1121px;width:64px;top:0px">Q</div>
<div class="abs" style="left:1185px;top:1px;width:1px;height:16px;background:#b6b6b6"></div>
<div class="ch" style="left:1185px;width:64px;top:0px">R</div>
<div class="abs" style="left:1249px;top:1px;width:1px;height:16px;background:#b6b6b6"></div>
<div class="ch" style="left:1249px;width:64px;top:0px">S</div>
<div class="abs" style="left:1313px;top:1px;width:1px;height:16px;background:#b6b6b6"></div>
<div class="ch" style="left:1313px;width:64px;top:0px">T</div>
<div class="abs" style="left:1377px;top:1px;width:1px;height:16px;background:#b6b6b6"></div>
<div class="ch" style="left:1377px;width:64px;top:0px">U</div>
<div class="abs" style="left:1441px;top:1px;width:1px;height:16px;background:#b6b6b6"></div>
<div class="ch" style="left:1441px;width:64px;top:0px">V</div>
<div class="abs" style="left:1505px;top:1px;width:1px;height:16px;background:#b6b6b6"></div>
<div class="ch" style="left:1505px;width:64px;top:0px">W</div>
<div class="abs" style="left:1569px;top:1px;width:1px;height:16px;background:#b6b6b6"></div>
<div class="ch" style="left:1569px;width:64px;top:0px">X</div>
<div class="abs" style="left:1633px;top:1px;width:1px;height:16px;background:#b6b6b6"></div>
<div class="abs" style="left:179px;top:1px;width:1px;height:16px;background:#b6b6b6"></div>
<svg style="left:14px;top:5px" width="9" height="9" viewBox="0 0 9 9"><path d="M9 0v9h-9z" fill="#b8b8b8"/></svg>
<div class="abs" style="left:26px;top:1px;width:1px;height:17px;background:#9b9b9b"></div>
<div class="abs" style="left:0px;top:18px;width:26px;height:692px;background:#e6e6e6"></div>
<div class="abs" style="left:26px;top:18px;width:1px;height:692px;background:#9b9b9b"></div>
<div class="abs" style="left:0px;top:41px;width:26px;height:1px;background:#b6b6b6"></div>
<div class="rh" style="top:26px;height:13px;line-height:13px">1</div>
<div class="abs" style="left:0px;top:61px;width:26px;height:1px;background:#b6b6b6"></div>
<div class="rh" style="top:47px;height:13px;line-height:13px">2</div>
<div class="abs" style="left:0px;top:78px;width:26px;height:1px;background:#b6b6b6"></div>
<div class="rh" style="top:64px;height:13px;line-height:13px">3</div>
<div class="abs" style="left:0px;top:95px;width:26px;height:1px;background:#b6b6b6"></div>
<div class="rh" style="top:81px;height:13px;line-height:13px">4</div>
<div class="abs" style="left:0px;top:109px;width:26px;height:1px;background:#b6b6b6"></div>
<div class="rh" style="top:97px;height:13px;line-height:13px">5</div>
<div class="abs" style="left:0px;top:113px;width:26px;height:1px;background:#b6b6b6"></div>
<div class="abs" style="left:0px;top:137px;width:26px;height:1px;background:#b6b6b6"></div>
<div class="rh" style="top:123px;height:13px;line-height:13px">16</div>
<div class="abs" style="left:0px;top:163px;width:26px;height:1px;background:#b6b6b6"></div>
<div class="rh" style="top:149px;height:13px;line-height:13px">17</div>
<div class="abs" style="left:0px;top:188px;width:26px;height:1px;background:#b6b6b6"></div>
<div class="rh" style="top:174px;height:13px;line-height:13px">18</div>
<div class="abs" style="left:0px;top:213px;width:26px;height:1px;background:#b6b6b6"></div>
<div class="rh" style="top:199px;height:13px;line-height:13px">19</div>
<div class="abs" style="left:0px;top:228px;width:26px;height:1px;background:#b6b6b6"></div>
<div class="rh" style="top:214px;height:13px;line-height:13px">20</div>
<div class="abs" style="left:0px;top:253px;width:26px;height:1px;background:#b6b6b6"></div>
<div class="rh" style="top:239px;height:13px;line-height:13px">21</div>
<div class="abs" style="left:0px;top:268px;width:26px;height:1px;background:#b6b6b6"></div>
<div class="rh" style="top:254px;height:13px;line-height:13px">22</div>
<div class="abs" style="left:0px;top:285px;width:26px;height:1px;background:#b6b6b6"></div>
<div class="rh" style="top:271px;height:13px;line-height:13px">23</div>
<div class="abs" style="left:0px;top:302px;width:26px;height:1px;background:#b6b6b6"></div>
<div class="rh" style="top:288px;height:13px;line-height:13px">24</div>
<div class="abs" style="left:0px;top:319px;width:26px;height:1px;background:#b6b6b6"></div>
<div class="rh" style="top:305px;height:13px;line-height:13px">25</div>
<div class="abs" style="left:0px;top:343px;width:26px;height:1px;background:#b6b6b6"></div>
<div class="rh" style="top:329px;height:13px;line-height:13px">26</div>
<div class="abs" style="left:0px;top:358px;width:26px;height:1px;background:#b6b6b6"></div>
<div class="rh" style="top:344px;height:13px;line-height:13px">27</div>
<div class="abs" style="left:0px;top:382px;width:26px;height:1px;background:#b6b6b6"></div>
<div class="rh" style="top:367px;height:13px;line-height:13px">28</div>
<div class="abs" style="left:0px;top:400px;width:26px;height:1px;background:#b6b6b6"></div>
<div class="rh" style="top:386px;height:13px;line-height:13px">29</div>
<div class="abs" style="left:0px;top:417px;width:26px;height:1px;background:#b6b6b6"></div>
<div class="rh" style="top:403px;height:13px;line-height:13px">30</div>
<div class="abs" style="left:0px;top:434px;width:26px;height:1px;background:#b6b6b6"></div>
<div class="rh" style="top:420px;height:13px;line-height:13px">31</div>
<div class="abs" style="left:0px;top:451px;width:26px;height:1px;background:#b6b6b6"></div>
<div class="rh" style="top:437px;height:13px;line-height:13px">32</div>
<div class="abs" style="left:0px;top:468px;width:26px;height:1px;background:#b6b6b6"></div>
<div class="rh" style="top:454px;height:13px;line-height:13px">33</div>
<div class="abs" style="left:0px;top:485px;width:26px;height:1px;background:#b6b6b6"></div>
<div class="rh" style="top:471px;height:13px;line-height:13px">34</div>
<div class="abs" style="left:0px;top:502px;width:26px;height:1px;background:#b6b6b6"></div>
<div class="rh" style="top:488px;height:13px;line-height:13px">35</div>
<div class="abs" style="left:0px;top:519px;width:26px;height:1px;background:#b6b6b6"></div>
<div class="rh" style="top:505px;height:13px;line-height:13px">36</div>
<div class="abs" style="left:0px;top:536px;width:26px;height:1px;background:#b6b6b6"></div>
<div class="rh" style="top:522px;height:13px;line-height:13px">37</div>
<div class="abs" style="left:0px;top:553px;width:26px;height:1px;background:#b6b6b6"></div>
<div class="rh" style="top:539px;height:13px;line-height:13px">38</div>
<div class="abs" style="left:0px;top:570px;width:26px;height:1px;background:#b6b6b6"></div>
<div class="rh" style="top:556px;height:13px;line-height:13px">39</div>
<div class="abs" style="left:0px;top:587px;width:26px;height:1px;background:#b6b6b6"></div>
<div class="rh" style="top:573px;height:13px;line-height:13px">40</div>
<div class="abs" style="left:0px;top:604px;width:26px;height:1px;background:#b6b6b6"></div>
<div class="rh" style="top:590px;height:13px;line-height:13px">41</div>
<div class="abs" style="left:0px;top:621px;width:26px;height:1px;background:#b6b6b6"></div>
<div class="rh" style="top:607px;height:13px;line-height:13px">42</div>
<div class="abs" style="left:0px;top:638px;width:26px;height:1px;background:#b6b6b6"></div>
<div class="rh" style="top:624px;height:13px;line-height:13px">43</div>
<div class="abs" style="left:0px;top:655px;width:26px;height:1px;background:#b6b6b6"></div>
<div class="rh" style="top:641px;height:13px;line-height:13px">44</div>
<div class="abs" style="left:0px;top:672px;width:26px;height:1px;background:#b6b6b6"></div>
<div class="rh" style="top:658px;height:13px;line-height:13px">45</div>
<div class="abs" style="left:0px;top:689px;width:26px;height:1px;background:#b6b6b6"></div>
<div class="rh" style="top:675px;height:13px;line-height:13px">46</div>
<div class="abs" style="left:0px;top:706px;width:26px;height:1px;background:#b6b6b6"></div>
<div class="rh" style="top:692px;height:13px;line-height:13px">47</div>
<div class="abs" style="left:1657px;top:18px;width:1px;height:692px;background:#9b9b9b"></div>
<div class="abs" style="left:0px;top:710px;width:1658px;height:1px;background:#9b9b9b"></div>
<div class="abs" style="left:1661px;top:3px;width:15px;height:15px;background:#fffffd;border:1px solid #c6c6c6"></div>
<svg style="left:1665px;top:8px" width="7" height="4" viewBox="0 0 7 4"><path d="M0 4l3.500-4l3.500 4z" fill="#777"/></svg>
<div class="abs" style="left:1661px;top:18px;width:15px;height:598px;background:#fffffd;border:1px solid #c6c6c6"></div>
<div class="abs" style="left:1661px;top:616px;width:15px;height:79px;background:#d9d9d9"></div>
<div class="abs" style="left:1661px;top:695px;width:15px;height:15px;background:#fffffd;border:1px solid #c6c6c6"></div>
<svg style="left:1665px;top:701px" width="7" height="4" viewBox="0 0 7 4"><path d="M0 0l3.500 4l3.500-4z" fill="#777"/></svg>
<svg style="left:9px;top:353px" width="12.600" height="20" viewBox="0 0 12 19"><path d="M0.500 0.500v15l3.500-3.300l2.500 6l2-0.900l-2.500-5.800h4.800z" fill="#fff" stroke="#000" stroke-width="1"/></svg>
<svg style="left:640px;top:17px" width="110" height="62" viewBox="0 0 110 62">
<path d="M5.200 36.700L44.500 14.100V35.100L5.200 58.700z" fill="#29a8e0"/>
<path d="M44.500 14.100L64.200 25.500V47.800L44.500 35.100z" fill="#1c75bc"/>
<path d="M44.500 24.500L64.200 25.500V47.800L44.500 35.100z" fill="#1565b0" opacity="0.550"/>
<path d="M64.200 25.500L103.200 3.300V24.900L64.200 47.800z" fill="#29a8e0"/>
<path d="M64.200 25.500L86 13.200L103.200 24.900L64.200 47.800z" fill="#2590d3" opacity="0.750"/>
</svg>
<div class="cell" style="left:750px;top:21.0px;font-size:16.7px;font-weight:bold;color:#4a4a4c;letter-spacing:3.852px">VIVID</div>
<div class="cell" style="left:750.5px;top:43.19999999999999px;font-size:17px;font-weight:normal;color:#58585a;letter-spacing:2.604px">REPORTS</div>
<div class="cell" style="left:849px;top:44px;font-size:4px;color:#58595b">TM</div>
<div class="cell" style="left:750px;top:65.0px;font-size:7.2px;font-weight:bold;color:#707072;letter-spacing:0.025px">Business Intelligence</div>
</div>
<div id="stabs">
  <svg style="left:27px;top:8px" width="5" height="8" viewBox="0 0 5 8"><path d="M4.500 0.500v7l-4-3.500z" fill="#c0c0c0"/></svg>
  <svg style="left:57px;top:8px" width="5" height="8" viewBox="0 0 5 8"><path d="M0.500 0.500v7l4-3.500z" fill="#217346"/></svg>
  <div class="abs" style="left:101px;top:3px;width:1px;height:20px;background:#ababab"></div>
  <div class="t" style="left:117px;top:6px;font-size:13px;color:#444;letter-spacing:-0.331px">2ColumnBalanceSheet</div>
  <div class="abs" style="left:261px;top:3px;width:1px;height:20px;background:#ababab"></div>
  <div class="t" style="left:278px;top:6px;font-size:13px;color:#444;letter-spacing:0.037px">DetailwithoutVar</div>
  <div class="abs" style="left:391px;top:3px;width:1px;height:20px;background:#ababab"></div>
  <div class="t" style="left:410px;top:6px;font-size:13px;color:#444;letter-spacing:-0.381px">Detail_withVarianceFLEX</div>
  <div class="abs" style="left:567px;top:3px;width:1px;height:20px;background:#ababab"></div>
  <div class="t" style="left:581px;top:6px;font-size:13px;color:#444;letter-spacing:-0.158px">Detail</div>
  <!-- active tab -->
  <div class="abs" style="left:628px;top:-1px;width:83px;height:25px;background:#fffffd;border-left:1px solid #9b9b9b;border-right:1px solid #9b9b9b;border-bottom:2px solid #217346"></div>
  <div class="t" style="left:640px;top:6px;font-size:13px;font-weight:bold;color:#217346;letter-spacing:-0.221px">Summary</div>
  <div class="t" style="left:725px;top:6px;font-size:13px;color:#444;letter-spacing:-0.115px">12MonthsSummary</div>
  <div class="abs" style="left:853px;top:3px;width:1px;height:20px;background:#ababab"></div>
  <div class="t" style="left:868px;top:6px;font-size:13px;color:#444;width:71px;overflow:hidden;letter-spacing:-0.115px">12MonthsDetail</div>
  <div class="t" style="left:947px;top:6px;font-size:13px;font-weight:bold;color:#217346">...</div>
  <svg style="left:972px;top:5px" width="16" height="16" viewBox="0 0 16 16" fill="none" stroke="#666" stroke-width="1.200"><circle cx="8" cy="8" r="7"/><path d="M8 4v8M4 8h8"/></svg>
  <div class="abs" style="left:1008px;top:8px;width:2px;height:2px;background:#a0a0a0"></div>
  <div class="abs" style="left:1008px;top:12px;width:2px;height:2px;background:#a0a0a0"></div>
  <div class="abs" style="left:1008px;top:16px;width:2px;height:2px;background:#a0a0a0"></div>
  <!-- h scrollbar -->
  <div class="abs" style="left:1025px;top:6px;width:15px;height:15px;background:#fffffd;border:1px solid #c8c8c8"></div>
  <svg style="left:1029px;top:9px" width="5" height="8" viewBox="0 0 5 8"><path d="M4.500 0v8l-4.500-4z" fill="#555"/></svg>
  <div class="abs" style="left:1039px;top:6px;width:576px;height:15px;background:#fffffd;border:1px solid #c8c8c8"></div>
  <div class="abs" style="left:1615px;top:6px;width:25px;height:15px;background:#d8d8d8"></div>
  <div class="abs" style="left:1640px;top:6px;width:15px;height:15px;background:#fffffd;border:1px solid #c8c8c8"></div>
  <svg style="left:1645px;top:9px" width="5" height="8" viewBox="0 0 5 8"><path d="M0.500 0v8l4.500-4z" fill="#555"/></svg>
</div>
<div id="status">
  <div class="abs" style="left:0;top:0;width:1680px;height:1px;background:#d4d4d4"></div>
  <div class="t" style="left:9px;top:5px;font-size:11px;color:#555;letter-spacing:0.091px">Ready - Completed in 00:00.18</div>
  <div class="t" style="left:170.3px;top:5px;font-size:11px;color:#555;letter-spacing:0px">|</div>
  <div class="t" style="left:179.6px;top:5px;font-size:11px;color:#555;letter-spacing:-0.108px">Client: 78% (0.14)</div>
  <div class="t" style="left:272.6px;top:5px;font-size:11px;color:#555;letter-spacing:0px">|</div>
  <div class="t" style="left:281.4px;top:5px;font-size:11px;color:#555;letter-spacing:-0.266px">Server: 22%</div>
  <!-- view buttons -->
  <div class="abs" style="left:1368px;top:0px;width:40px;height:23px;background:#c8c6c4"></div>
  <svg style="left:1381px;top:4px" width="13" height="13" viewBox="0 0 13 13" fill="none" stroke="#333" stroke-width="1"><rect x="0.500" y="0.500" width="12" height="12"/><path d="M0.500 4.500h12M0.500 8.500h12M4.500 0.500v12M8.500 0.500v12"/></svg>
  <svg style="left:1421px;top:4px" width="14" height="13" viewBox="0 0 14 13" fill="none" stroke="#444" stroke-width="1"><rect x="0.500" y="0.500" width="13" height="12"/><rect x="3.500" y="2.500" width="7" height="8"/><path d="M5 5h4M5 7.500h4"/></svg>
  <svg style="left:1461px;top:4px" width="14" height="13" viewBox="0 0 14 13" fill="none" stroke="#444" stroke-width="1"><rect x="0.500" y="0.500" width="13" height="12"/><path d="M4.500 0.500v7.500M8.500 0.500v7.500M0.500 8h8"/></svg>
  <div class="abs" style="left:1494px;top:11px;width:8px;height:1px;background:#444"></div>
  <div class="abs" style="left:1507px;top:11px;width:100px;height:1px;background:#a0a0a0"></div>
  <div class="abs" style="left:1555px;top:5px;width:5px;height:11px;background:#767676"></div>
  <div class="abs" style="left:1612px;top:11px;width:8px;height:1px;background:#444"></div>
  <div class="abs" style="left:1615px;top:8px;width:1px;height:8px;background:#444"></div>
  <div class="t" style="left:1634px;top:5px;font-size:11px;color:#555;letter-spacing:-0.51px">100%</div>
</div>
<!-- window frame -->
<div class="abs" style="left:0;top:0;width:1px;height:968px;background:#757575"></div>
<div class="abs" style="left:0;top:0;width:1px;height:35px;background:#8c8a8c"></div>
<div class="abs" style="left:0;top:0;width:1680px;height:1px;background:#8c8a8c"></div>
<div class="abs" style="left:1679px;top:0;width:1px;height:35px;background:#8c8a8c"></div>
<div class="abs" style="left:1679px;top:35px;width:1px;height:933px;background:#c2c2c2"></div>
<div class="abs" style="left:0;top:967px;width:1680px;height:1px;background:#8a8a8a"></div>

</div></body></html>
